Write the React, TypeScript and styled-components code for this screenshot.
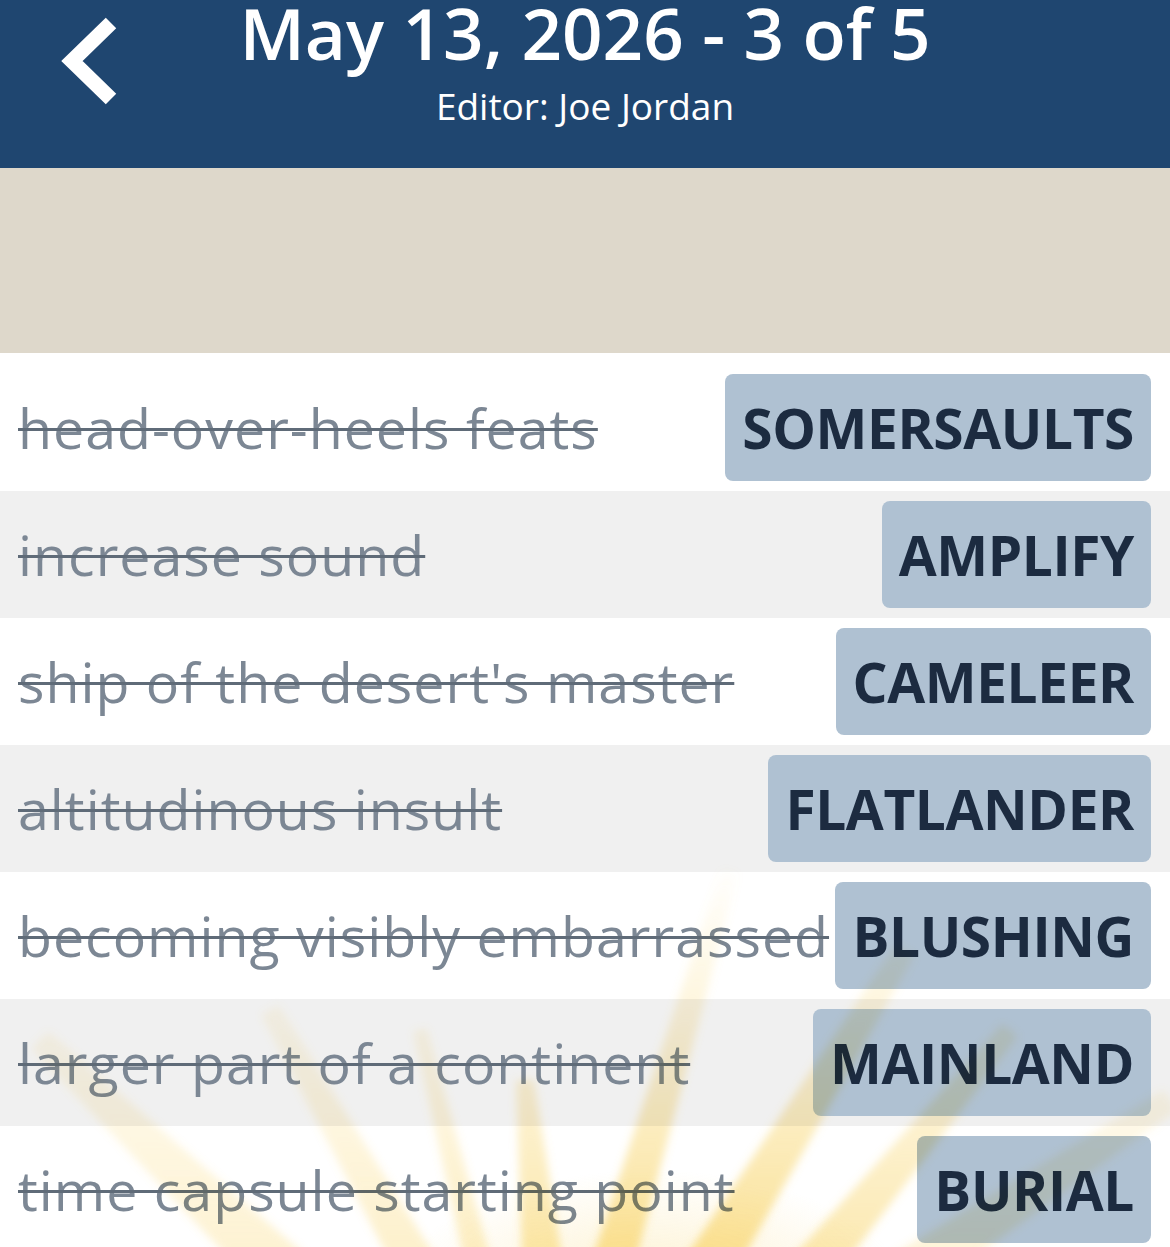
import React from "react";
import styled, { createGlobalStyle } from "styled-components";

interface Entry {
    clue: string;
    answer: string;
}

const entries: Entry[] = [
    { clue: "head-over-heels feats", answer: "SOMERSAULTS" },
    { clue: "increase sound", answer: "AMPLIFY" },
    { clue: "ship of the desert's master", answer: "CAMELEER" },
    { clue: "altitudinous insult", answer: "FLATLANDER" },
    { clue: "becoming visibly embarrassed", answer: "BLUSHING" },
    { clue: "larger part of a continent", answer: "MAINLAND" },
    { clue: "time capsule starting point", answer: "BURIAL" },
];

// light rays fanning up from below the list (page coordinates)
interface Ray {
    b: [number, number];
    t: [number, number];
    hb: number;
    ht: number;
    o: number;
}

const rays: Ray[] = [
    { b: [300, 1290], t: [40, 1040], hb: 30, ht: 12, o: 0.35 },
    { b: [430, 1290], t: [270, 1010], hb: 22, ht: 10, o: 0.4 },
    { b: [485, 1290], t: [420, 1030], hb: 14, ht: 7, o: 0.45 },
    { b: [545, 1290], t: [525, 1080], hb: 22, ht: 9, o: 0.65 },
    { b: [605, 1290], t: [730, 870], hb: 22, ht: 9, o: 0.8 },
    { b: [695, 1290], t: [905, 950], hb: 26, ht: 11, o: 0.8 },
    { b: [795, 1290], t: [1010, 1030], hb: 24, ht: 10, o: 0.6 },
    { b: [885, 1290], t: [1170, 1100], hb: 26, ht: 12, o: 0.3 },
];

const rayPoints = (r: Ray) => {
    const dx = r.t[0] - r.b[0];
    const dy = r.t[1] - r.b[1];
    const len = Math.hypot(dx, dy);
    const nx = -dy / len;
    const ny = dx / len;
    return [
        [r.b[0] + nx * r.hb, r.b[1] + ny * r.hb],
        [r.t[0] + nx * r.ht, r.t[1] + ny * r.ht],
        [r.t[0] - nx * r.ht, r.t[1] - ny * r.ht],
        [r.b[0] - nx * r.hb, r.b[1] - ny * r.hb],
    ]
        .map((p) => p.join(","))
        .join(" ");
};

const Sunburst: React.FC = () => (
    <RaysLayer viewBox="0 0 1170 900" preserveAspectRatio="none">
        <defs>
            <linearGradient id="rayFade" gradientUnits="userSpaceOnUse" x1="0" y1="1290" x2="0" y2="860">
                <stop offset="0" stopColor="#f8cf58" stopOpacity="0.85" />
                <stop offset="0.5" stopColor="#f8d46a" stopOpacity="0.42" />
                <stop offset="1" stopColor="#f9d873" stopOpacity="0" />
            </linearGradient>
            <radialGradient id="glow">
                <stop offset="0" stopColor="#f9d56a" stopOpacity="0.35" />
                <stop offset="1" stopColor="#f9d56a" stopOpacity="0" />
            </radialGradient>
            <filter id="raySoft" x="-10%" y="-10%" width="120%" height="120%">
                <feGaussianBlur stdDeviation="4" />
            </filter>
        </defs>
        <g transform="translate(0,-353)">
            <ellipse cx="650" cy="1300" rx="260" ry="130" fill="url(#glow)" />
            <g filter="url(#raySoft)">
                {rays.map((r, i) => (
                    <polygon key={i} points={rayPoints(r)} fill="url(#rayFade)" opacity={r.o} />
                ))}
            </g>
        </g>
    </RaysLayer>
);

const App: React.FC = () => {
    return (
        <Page>
            <GlobalStyle />
            <Header>
                <BackButton aria-label="Back">
                    <svg width="64" height="92" viewBox="0 0 64 92">
                        <polyline
                            points="53,7 14,45 53,83"
                            fill="none"
                            stroke="#ffffff"
                            strokeWidth="15"
                            strokeLinejoin="miter"
                            strokeLinecap="butt"
                        />
                    </svg>
                </BackButton>
                <TitleBlock>
                    <Title>May 13, 2026 - 3 of 5</Title>
                    <Subtitle>Editor: Joe Jordan</Subtitle>
                </TitleBlock>
                <div />
            </Header>
            <Banner />
            <List>
                {entries.map((entry, index) => (
                    <Row key={entry.answer} $shaded={index % 2 === 1}>
                        <Clue>{entry.clue}</Clue>
                        <Answer>{entry.answer}</Answer>
                    </Row>
                ))}
                <Sunburst />
            </List>
        </Page>
    );
};

export default App;

const GlobalStyle = createGlobalStyle`
    html, body {
        margin: 0;
        padding: 0;
        background: #ffffff;
    }
    body {
        font-family: "Open Sans", "Noto Sans", sans-serif;
    }
`;

const Page = styled.div`
    width: 1170px;
    height: 1247px;
    overflow: hidden;
    display: flex;
    flex-direction: column;
`;

const Header = styled.header`
    height: 168px;
    flex-shrink: 0;
    background-color: #1f4670;
    display: grid;
    grid-template-columns: 1fr auto 1fr;
    align-items: start;
`;

const BackButton = styled.button`
    justify-self: start;
    margin: 16px 0 0 58px;
    padding: 0;
    border: none;
    background: transparent;
    line-height: 0;
    cursor: pointer;
`;

const TitleBlock = styled.div`
    display: flex;
    flex-direction: column;
    align-items: center;
    padding-top: 2px;
    color: #ffffff;
`;

const Title = styled.h1`
    margin: 0;
    font-size: 71px;
    line-height: 62px;
    font-weight: 600;
    white-space: nowrap;
`;

const Subtitle = styled.div`
    margin-top: 23px;
    font-size: 37px;
    line-height: 1;
    font-weight: 400;
`;

const Banner = styled.div`
    height: 185px;
    flex-shrink: 0;
    background-color: #ded8cb;
`;

const List = styled.div`
    position: relative;
    padding-top: 11px;
    background-color: #ffffff;
`;

const Row = styled.div<{ $shaded: boolean }>`
    height: 127px;
    display: flex;
    align-items: center;
    justify-content: space-between;
    gap: 7px;
    padding: 0 19px 0 18px;
    box-sizing: border-box;
    background-color: ${(p) => (p.$shaded ? "#f0f0f0" : "#ffffff")};
`;

const Clue = styled.span`
    min-width: 0;
    font-size: 55.5px;
    line-height: 1;
    letter-spacing: 1px;
    color: #7c8794;
    white-space: nowrap;
    text-decoration: line-through;
    text-decoration-color: #5f6b78;
    text-decoration-thickness: 2.5px;
`;

const Answer = styled.span`
    flex-shrink: 0;
    height: 107px;
    display: flex;
    align-items: center;
    padding: 0 17px;
    border-radius: 8px;
    background-color: #afc1d2;
    color: #1c2b40;
    font-size: 55px;
    line-height: 1;
    font-weight: 700;
    letter-spacing: -0.4px;
`;

const RaysLayer = styled.svg`
    position: absolute;
    left: 0;
    top: 0;
    width: 100%;
    height: 900px;
    pointer-events: none;
    mix-blend-mode: multiply;
`;
